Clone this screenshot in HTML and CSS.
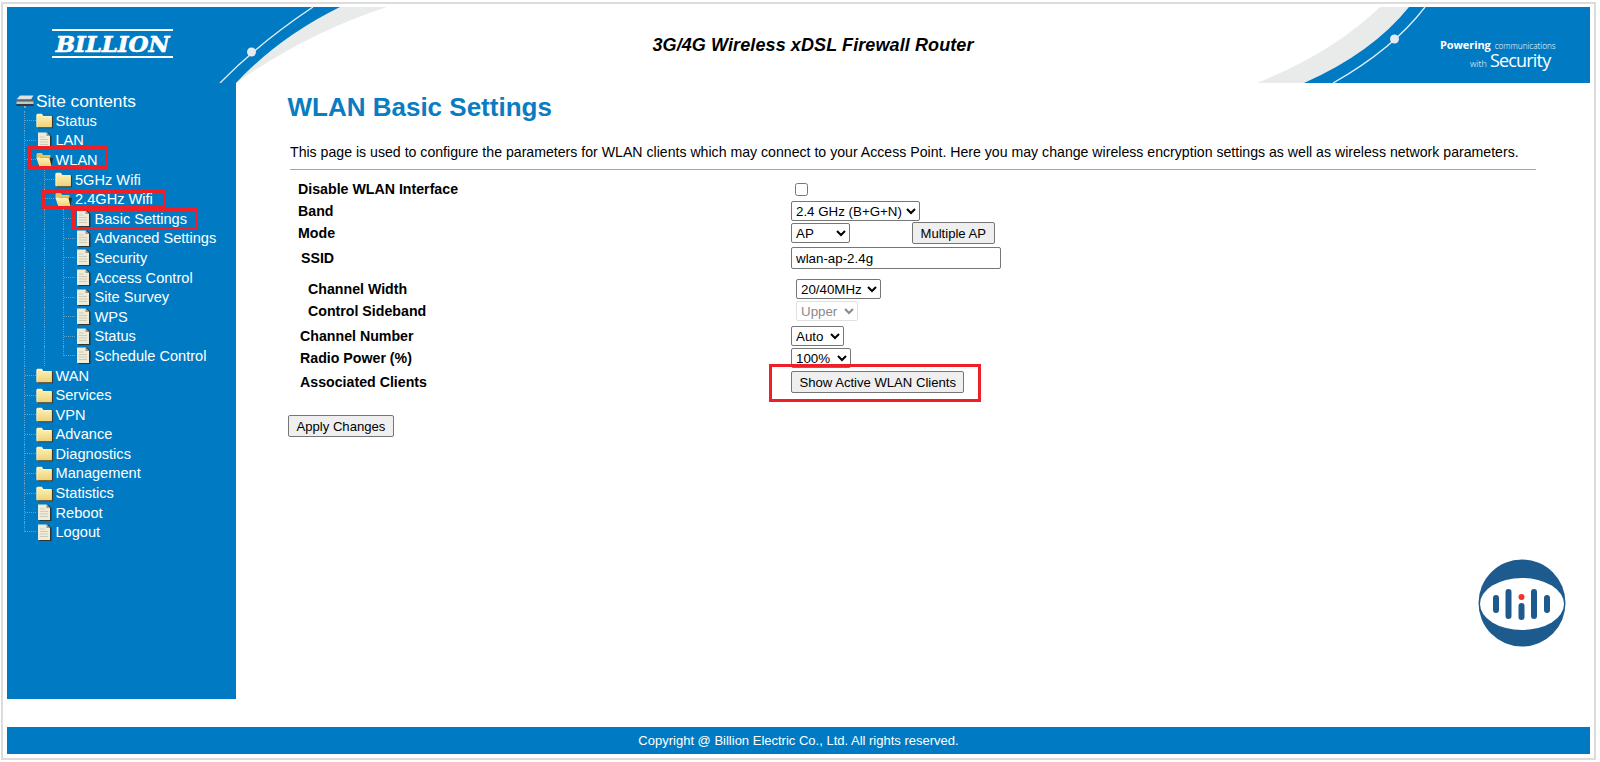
FILE: index.html
```html
<!DOCTYPE html>
<html lang="en">
<head>
<meta charset="utf-8">
<title>WLAN Basic Settings</title>
<link rel="stylesheet" href="styles.css">
</head>
<body>
<svg class="defs" width="0" height="0" aria-hidden="true">
  <defs>
    <linearGradient id="fg" x1="0" y1="0" x2="0" y2="1">
      <stop offset="0" stop-color="#fff3b8"/>
      <stop offset="1" stop-color="#efd27a"/>
    </linearGradient>
  </defs>
  <symbol id="folder" viewBox="0 .5 16 14.500">
    <path d="M2 3h5l1 1h8V15H2z" fill="#3b3a30"/>
    <path d="M.5 2.500Q.5 1.500 1.500 1.500h4l1.500 2H14Q15 3.500 15 4.500V14H.5z" fill="url(#fg)"/>
    <path d="M.9 13.500V2.500h4.500M7 4h7.500" stroke="#fff9d8" stroke-width=".7" fill="none"/>
  </symbol>
  <symbol id="folder-open" viewBox="0 .5 16.500 14.500">
    <path d="M.5 3Q.5 1.500 1.500 1.500h4l1.500 2H14V7H.5z" fill="#e2c468"/>
    <path d="M4 6h12.500L15 15H2z" fill="#2f2c20"/>
    <path d="M.5 6H13l2 8H3z" fill="url(#fg)"/>
  </symbol>
  <symbol id="page" viewBox="0 0 15 17">
    <path d="M2.500 1h9l3 3v13h-12z" fill="#2f3330"/>
    <path d="M1 .5h8.500L13 4v12H1z" fill="#eeecd8"/>
    <path d="M9.500.5V4H13z" fill="#9a9983"/>
    <path d="M3 5h4.500M3 7.500h8M3 10h8M3 12.500h8" stroke="#c9c8b4" stroke-width=".9"/>
  </symbol>
  <symbol id="root" viewBox="0 0 18 13">
    <path d="M4 .5h13.500L15 4.500H.5z" fill="#dfe2e3"/>
    <path d="M.5 4.500h17v2H.5z" fill="#5d6368"/>
    <path d="M.5 6.500h17v2.500H.5z" fill="#c3c7c9"/>
    <path d="M.5 9h17v2H.5z" fill="#33393d"/>
    <path d="M9 11v2" stroke="#e2b13c" stroke-width="1.500"/>
  </symbol>
</svg>

<div class="frame">
  <header class="banner">
    <div class="banner-left">
      <svg class="art" viewBox="0 0 383 76" width="383" height="76" aria-hidden="true">
        <path d="M0 0H380Q300 26 229 76H0z" fill="#e9ebeb"/>
        <path d="M0 0H333Q272 30 229 76H0z" fill="#007bc3"/>
        <path d="M306 0Q252 36 213 76" stroke="#e4eef4" stroke-width="1.300" fill="none"/>
        <circle cx="244.500" cy="45" r="4.500" fill="#e4eaee"/>
      </svg>
      <div class="brand"><span class="brand-name">BILLION</span></div>
    </div>
    <h2 class="tagline">3G/4G Wireless xDSL Firewall Router</h2>
    <div class="banner-right">
      <svg class="art" viewBox="0 0 333 76" width="333" height="76" aria-hidden="true">
        <path d="M0 76Q75 46 123 0H333V76z" fill="#e9ebeb"/>
        <path d="M47 76Q115 46 152 0H333V76z" fill="#007bc3"/>
        <path d="M76 76Q136 42 168 0" stroke="#e4eef4" stroke-width="1.300" fill="none"/>
        <circle cx="137.500" cy="32" r="4.500" fill="#e4eaee"/>
      </svg>
      <div class="slogan">
        <div class="slogan-line first"><b>Powering</b><span class="thin comm">communications</span></div>
        <div class="slogan-line second"><span class="thin with">with</span><span class="security">Security</span></div>
      </div>
    </div>
  </header>

  <div class="body">
    <nav class="side">
      <div class="row root"><svg class="ico ico-root"><use href="#root"/></svg><span class="site">Site contents</span></div>

      <div class="row"><i class="j"></i><svg class="ico"><use href="#folder"/></svg><a>Status</a></div>
      <div class="row"><i class="j"></i><svg class="ico"><use href="#page"/></svg><a>LAN</a></div>
      <div class="row"><i class="j"></i><svg class="ico"><use href="#folder-open"/></svg><a>WLAN</a></div>
      <div class="row"><i class="v"></i><i class="j"></i><svg class="ico"><use href="#folder"/></svg><a>5GHz Wifi</a></div>
      <div class="row"><i class="v"></i><i class="l"></i><svg class="ico"><use href="#folder-open"/></svg><a>2.4GHz Wifi</a></div>
      <div class="row"><i class="v"></i><i class="s"></i><i class="j"></i><svg class="ico"><use href="#page"/></svg><a>Basic Settings</a></div>
      <div class="row"><i class="v"></i><i class="s"></i><i class="j"></i><svg class="ico"><use href="#page"/></svg><a>Advanced Settings</a></div>
      <div class="row"><i class="v"></i><i class="s"></i><i class="j"></i><svg class="ico"><use href="#page"/></svg><a>Security</a></div>
      <div class="row"><i class="v"></i><i class="s"></i><i class="j"></i><svg class="ico"><use href="#page"/></svg><a>Access Control</a></div>
      <div class="row"><i class="v"></i><i class="s"></i><i class="j"></i><svg class="ico"><use href="#page"/></svg><a>Site Survey</a></div>
      <div class="row"><i class="v"></i><i class="s"></i><i class="j"></i><svg class="ico"><use href="#page"/></svg><a>WPS</a></div>
      <div class="row"><i class="v"></i><i class="s"></i><i class="j"></i><svg class="ico"><use href="#page"/></svg><a>Status</a></div>
      <div class="row"><i class="v"></i><i class="s"></i><i class="l"></i><svg class="ico"><use href="#page"/></svg><a>Schedule Control</a></div>
      <div class="row"><i class="j"></i><svg class="ico"><use href="#folder"/></svg><a>WAN</a></div>
      <div class="row"><i class="j"></i><svg class="ico"><use href="#folder"/></svg><a>Services</a></div>
      <div class="row"><i class="j"></i><svg class="ico"><use href="#folder"/></svg><a>VPN</a></div>
      <div class="row"><i class="j"></i><svg class="ico"><use href="#folder"/></svg><a>Advance</a></div>
      <div class="row"><i class="j"></i><svg class="ico"><use href="#folder"/></svg><a>Diagnostics</a></div>
      <div class="row"><i class="j"></i><svg class="ico"><use href="#folder"/></svg><a>Management</a></div>
      <div class="row"><i class="j"></i><svg class="ico"><use href="#folder"/></svg><a>Statistics</a></div>
      <div class="row"><i class="j"></i><svg class="ico"><use href="#page"/></svg><a>Reboot</a></div>
      <div class="row"><i class="l"></i><svg class="ico"><use href="#page"/></svg><a>Logout</a></div>
    </nav>

    <main class="content">
      <h1 class="title">WLAN Basic Settings</h1>
      <p class="intro">This page is used to configure the parameters for WLAN clients which may connect to your Access Point. Here you may change wireless encryption settings as well as wireless network parameters.</p>
      <hr class="rule">
      <form class="form">
        <div class="f"><label class="lab i9">Disable WLAN Interface</label><div class="ctl c4"><input class="check" type="checkbox"></div></div>
        <div class="f"><label class="lab i9">Band</label><div class="ctl"><select class="sel w-band"><option>2.4 GHz (B+G+N)</option></select></div></div>
        <div class="f"><label class="lab i9">Mode</label><div class="ctl"><select class="sel w-mode"><option>AP</option></select><button class="btn multi" type="button">Multiple AP</button></div></div>
        <div class="f ssid"><label class="lab i12">SSID</label><div class="ctl"><input class="txt" type="text" value="wlan-ap-2.4g"></div></div>
        <div class="f"><label class="lab i20">Channel Width</label><div class="ctl c5"><select class="sel w-width"><option>20/40MHz</option></select></div></div>
        <div class="f after3"><label class="lab i20">Control Sideband</label><div class="ctl c5"><select class="sel w-side" disabled><option>Upper</option></select></div></div>
        <div class="f"><label class="lab i11">Channel Number</label><div class="ctl"><select class="sel w-auto"><option>Auto</option></select></div></div>
        <div class="f after2"><label class="lab i11">Radio Power (%)</label><div class="ctl"><select class="sel w-pow"><option>100%</option></select></div></div>
        <div class="f"><label class="lab i11">Associated Clients</label><div class="ctl"><button class="btn" type="button">Show Active WLAN Clients</button></div></div>
      </form>
      <button class="btn apply" type="button">Apply Changes</button>
    </main>
  </div>

  <footer class="foot">Copyright @ Billion Electric Co., Ltd. All rights reserved.</footer>

  <svg class="badge" viewBox="0 0 88 88" width="88" height="88" aria-hidden="true">
    <circle cx="44" cy="44" r="43.500" fill="#1d5b8f"/>
    <ellipse cx="44" cy="45" rx="42" ry="26" fill="#fff"/>
    <g stroke="#1d5b8f" stroke-width="6" stroke-linecap="round">
      <path d="M18 39v12M30.500 33v24M56 33v24M69 39v12M43.500 47v11"/>
    </g>
    <circle cx="43.500" cy="38" r="3" fill="#f5302e"/>
  </svg>

  <span class="mark m-wlan"></span>
  <span class="mark m-24"></span>
  <span class="mark m-basic"></span>
  <span class="mark m-show"></span>
</div>
</body>
</html>
```
FILE: styles.css
```css
* { box-sizing: border-box; }
html, body { margin: 0; padding: 0; background: #fff; }
body { font-family: "Liberation Sans", Arial, sans-serif; color: #000; height: 762px; overflow: hidden; }
.defs { position: absolute; }

.frame {
  position: relative;
  margin: 2px 4px 0 1px;
  height: 758px;
  border: 2px solid #dcdcdc;
  padding: 3px 4px 4px 4px;
  display: flex;
  flex-direction: column;
}

/* banner */
.banner { height: 76px; display: flex; flex: none; }
.banner-left { position: relative; width: 383px; flex: none; }
.banner-right { position: relative; width: 333px; flex: none; }
.art { position: absolute; left: 0; top: 0; display: block; }
.brand { position: relative; padding: 22px 0 0 45px; }
.brand-name {
  display: block;
  width: 121px;
  height: 29px;
  border-top: 2px solid #fff;
  border-bottom: 2px solid #fff;
  color: #fff;
  font: italic bold 23px/25px "DejaVu Serif", serif;
  letter-spacing: -.1px;
  text-align: center;
  -webkit-text-stroke: .6px #fff;
}
.tagline {
  flex: 1;
  margin: 0;
  padding: 28px 21px 0 0;
  font: italic bold 18px/20px "Liberation Sans", Arial, sans-serif;
  letter-spacing: .1px;
  text-align: center;
  white-space: nowrap;
}
.slogan { position: relative; padding: 32px 0 0 183px; color: #fff; font-family: "Open Sans", "Liberation Sans", sans-serif; }
.slogan-line { white-space: nowrap; }
.first { display: flex; align-items: baseline; height: 12px; line-height: 12px; }
.first b { font-size: 11px; font-weight: 700; letter-spacing: -.1px; }
.thin { font-weight: 300; }
.comm { font-size: 8.200px; margin-left: 4px; }
.second { display: flex; align-items: baseline; height: 18px; line-height: 18px; padding-left: 30px; }
.with { font-size: 9px; }
.security { font-size: 18px; font-weight: 400; letter-spacing: -.8px; margin-left: 3px; }

/* body */
.body { flex: 1; display: flex; min-height: 0; }
.side {
  width: 229px;
  flex: none;
  height: 616px;
  background: #007bc3;
  color: #fff;
  padding: 8px 0 0 9px;
  font-size: 14.600px;
}
.row { display: flex; align-items: center; height: 19.6px; white-space: nowrap; }
.root { height: 20px; }
.site { font-size: 17.300px; margin-left: 2px; }
.ico { width: 17px; height: 17px; flex: none; margin-right: 3px; }
.ico-root { width: 18px; height: 13px; margin-right: 0; }
.row a { color: #fff; }
.row i { display: block; flex: none; height: 100%; }
.row .v, .row .s { width: 19.500px; margin-left: 8px; margin-right: -8px; border-left: 1px dotted #5aa5d2; }
.row .j, .row .l {
  margin-left: 8px;
  width: 11.500px;
  border-left: 1px dotted #5aa5d2;
  background: repeating-linear-gradient(90deg, #5aa5d2 0 1px, transparent 1px 2px) 0 50% / 100% 1px no-repeat;
}
.row .l { height: 50%; align-self: flex-start; background-position: 0 100%; }

/* content */
.content { flex: 1; min-width: 0; padding: 0 0 0 51px; }
.title { margin: 8px 0 0 .5px; font-size: 26px; line-height: 32px; font-weight: bold; color: #0a7cc2; }
.intro { margin: 20px 0 0 3px; font-size: 14.130px; line-height: 18px; white-space: nowrap; }
.rule { margin: 8px 0 0 3px; width: 1246px; height: 1px; border: 0; background: #a5a5a5; }
.form { margin-top: 8px; font-size: 14.200px; }
.f { display: grid; grid-template-columns: 504px 1fr; align-items: center; height: 22px; }
.ssid { height: 28px; margin-bottom: 6px; }
.after3 { margin-bottom: 3px; }
.after2 { margin-bottom: 2px; }
.lab { font-weight: bold; white-space: nowrap; }
.i9 { padding-left: 11px; }
.i11 { padding-left: 13px; }
.i12 { padding-left: 14px; }
.i20 { padding-left: 21px; }
.ctl { display: flex; align-items: center; height: 100%; }
.c4 { padding-left: 4px; }
.c5 { padding-left: 5px; }
.check { margin: 0; width: 13px; height: 13px; }
.sel, .txt { font-family: "Liberation Sans", Arial, sans-serif; font-size: 13.333px; }
.btn { font-family: "Liberation Sans", Arial, sans-serif; font-size: 13.100px; }
.sel { height: 20px; padding: 0; background: #fff; border: 1px solid #767676; border-radius: 2px; color: #000; }
.sel:disabled { color: #8a8a8a; border-color: #e0e0e0; opacity: 1; }
.w-band { width: 129px; }
.w-mode { width: 59px; }
.w-width { width: 85px; }
.w-side { width: 62px; }
.w-auto { width: 53px; }
.w-pow { width: 60px; }
.btn { height: 22px; padding: 0 7.500px; background: #efefef; border: 1px solid #767676; border-radius: 2px; color: #000; white-space: nowrap; }
.multi { margin-left: 62px; }
.txt { width: 210px; height: 22px; padding: 1px 4px; border: 1px solid #767676; border-radius: 2px; }
.apply { margin: 22px 0 0 1px; }

/* footer */
.foot {
  flex: none;
  height: 27px;
  background: #007bc3;
  color: #fff;
  font-size: 13px;
  line-height: 27px;
  text-align: center;
}

/* overlays */
.badge { position: absolute; left: 1475px; top: 555px; }
.mark { position: absolute; border: 3px solid #ee1f27; pointer-events: none; }
.m-wlan { left: 25px; top: 142px; width: 80px; height: 23px; }
.m-24 { left: 39px; top: 186px; width: 124px; height: 19px; }
.m-basic { left: 69px; top: 204px; width: 126px; height: 22px; }
.m-show { left: 766px; top: 360px; width: 212px; height: 38px; }
```
